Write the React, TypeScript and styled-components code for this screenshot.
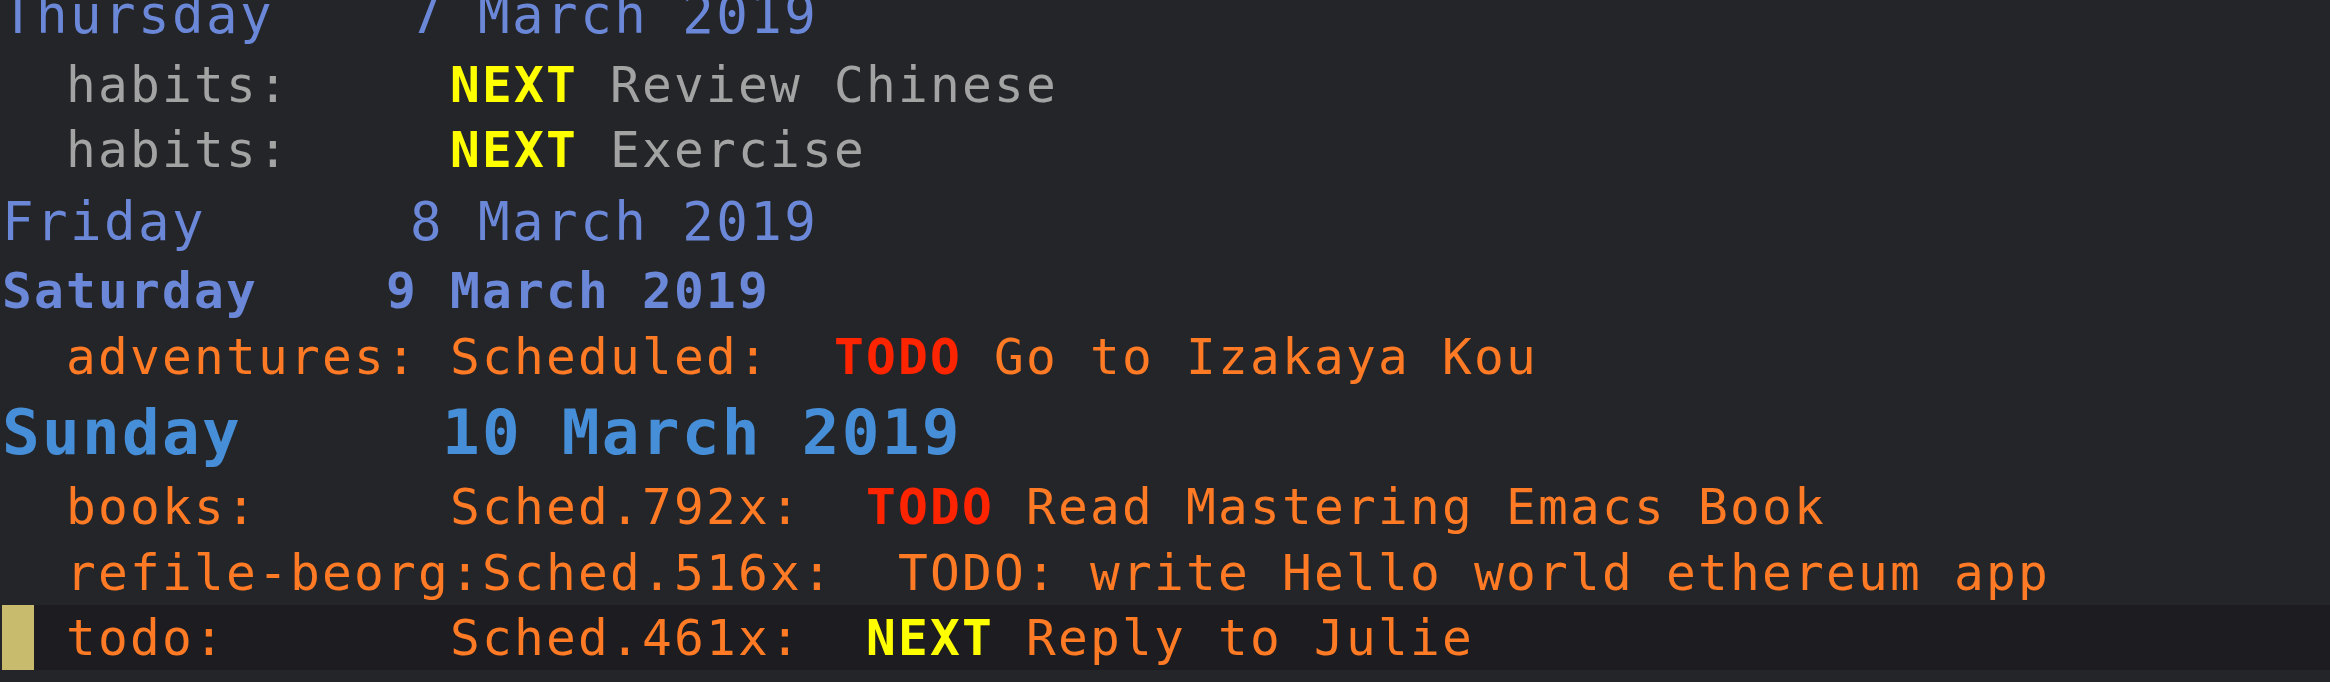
import React from "react";
import styled, { createGlobalStyle, css } from "styled-components";

const GlobalStyle = createGlobalStyle`
  html, body {
    margin: 0;
    padding: 0;
    background: #242529;
  }
  #root {
    height: 682px;
  }
`;

type RowKind = "date" | "weekend" | "today" | "item";
type Tone = "habit" | "sched";
type Seg = { text: string; kw?: "next" | "todo" };

interface RowData {
  kind: RowKind;
  tone?: Tone;
  current?: boolean;
  segs: Seg[];
}

const Viewport = styled.div`
  height: 682px;
  overflow: hidden;
  background: #242529;
  font-family: "DejaVu Sans Mono", "Liberation Mono", monospace;
`;

/* scrolled buffer: the first line is partly above the window */
const Buffer = styled.div`
  margin-top: -24.2px;
  padding-left: 2px;
  display: flex;
  flex-direction: column;
`;

const metrics: Record<RowKind, { h: number; fs: number; ls: number; pad: number; weight: number; color: string }> = {
  date: { h: 75.5, fs: 52.5, ls: 2.4, pad: 4.6, weight: 400, color: "#6b87d8" },
  weekend: { h: 65.5, fs: 49.5, ls: 2.2, pad: 2.6, weight: 700, color: "#6b87d8" },
  today: { h: 84.7, fs: 62.7, ls: 2.25, pad: 3.3, weight: 700, color: "#468fd8" },
  item: { h: 65.5, fs: 49.5, ls: 2.2, pad: 2.6, weight: 400, color: "#a3a3a3" },
};

const toneColor: Record<Tone, string> = {
  habit: "#a3a3a3",
  sched: "#fe7a24",
};

const Row = styled.div<{ $kind: RowKind; $tone?: Tone; $current?: boolean }>`
  display: flex;
  height: ${(p) => metrics[p.$kind].h}px;
  font-size: ${(p) => metrics[p.$kind].fs}px;
  letter-spacing: ${(p) => metrics[p.$kind].ls}px;
  font-weight: ${(p) => metrics[p.$kind].weight};
  color: ${(p) => (p.$tone ? toneColor[p.$tone] : metrics[p.$kind].color)};
  background: ${(p) => (p.$current ? "#1d1d21" : "transparent")};
`;

const Line = styled.span<{ $kind: RowKind }>`
  white-space: pre;
  padding-top: ${(p) => metrics[p.$kind].pad}px;
  line-height: ${(p) => metrics[p.$kind].h - metrics[p.$kind].pad}px;
`;

const Cursor = styled.span`
  flex: 0 0 32px;
  align-self: stretch;
  background: #c9bb6e;
`;

const Keyword = styled.span<{ $kw: "next" | "todo" }>`
  font-weight: 700;
  ${(p) =>
    p.$kw === "next"
      ? css`
          color: #ffff00;
        `
      : css`
          color: #ff2400;
        `}
`;

const header = (day: string, d: number) =>
  `${day.padEnd(10)} ${String(d).padStart(2)} March 2019`;

const rows: RowData[] = [
  { kind: "date", segs: [{ text: header("Thursday", 7) }] },
  {
    kind: "item",
    tone: "habit",
    segs: [{ text: "  habits:     " }, { text: "NEXT", kw: "next" }, { text: " Review Chinese" }],
  },
  {
    kind: "item",
    tone: "habit",
    segs: [{ text: "  habits:     " }, { text: "NEXT", kw: "next" }, { text: " Exercise" }],
  },
  { kind: "date", segs: [{ text: header("Friday", 8) }] },
  { kind: "weekend", segs: [{ text: header("Saturday", 9) }] },
  {
    kind: "item",
    tone: "sched",
    segs: [{ text: "  adventures: Scheduled:  " }, { text: "TODO", kw: "todo" }, { text: " Go to Izakaya Kou" }],
  },
  { kind: "today", segs: [{ text: header("Sunday", 10) }] },
  {
    kind: "item",
    tone: "sched",
    segs: [{ text: "  books:      Sched.792x:  " }, { text: "TODO", kw: "todo" }, { text: " Read Mastering Emacs Book" }],
  },
  {
    kind: "item",
    tone: "sched",
    segs: [{ text: "  refile-beorg:Sched.516x:  TODO: write Hello world ethereum app" }],
  },
  {
    kind: "item",
    tone: "sched",
    current: true,
    segs: [{ text: "  todo:       Sched.461x:  " }, { text: "NEXT", kw: "next" }, { text: " Reply to Julie" }],
  },
];

export default function App() {
  return (
    <>
      <GlobalStyle />
      <Viewport>
        <Buffer>
          {rows.map((r, i) => {
            const segs = r.current
              ? [{ ...r.segs[0], text: r.segs[0].text.slice(1) }, ...r.segs.slice(1)]
              : r.segs;
            return (
              <Row key={i} $kind={r.kind} $tone={r.tone} $current={r.current}>
                {r.current && <Cursor />}
                <Line $kind={r.kind}>
                  {segs.map((s, j) =>
                    s.kw ? (
                      <Keyword key={j} $kw={s.kw}>
                        {s.text}
                      </Keyword>
                    ) : (
                      <React.Fragment key={j}>{s.text}</React.Fragment>
                    )
                  )}
                </Line>
              </Row>
            );
          })}
        </Buffer>
      </Viewport>
    </>
  );
}
